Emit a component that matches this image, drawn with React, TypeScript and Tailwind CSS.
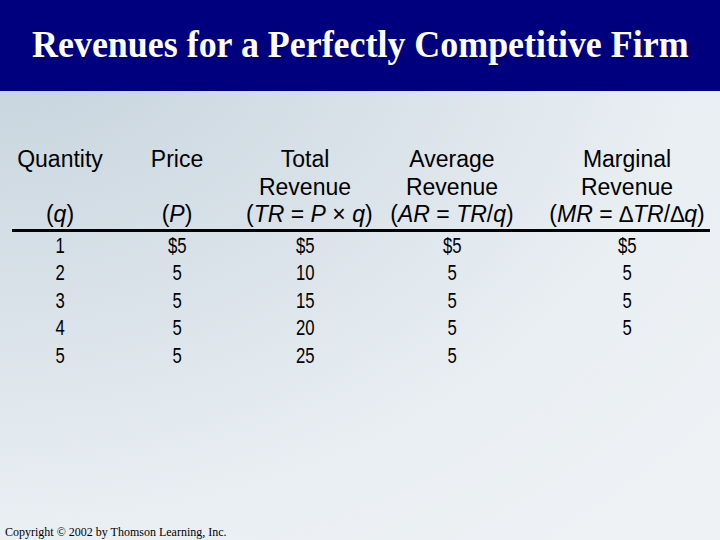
const rows = [
  ["1", "$5", "$5", "$5", "$5"],
  ["2", "5", "10", "5", "5"],
  ["3", "5", "15", "5", "5"],
  ["4", "5", "20", "5", "5"],
  ["5", "5", "25", "5", ""],
];

const cols = "grid grid-cols-[96px_138px_118px_176px_174px] text-center";

export default function App() {
  return (
    <div className="flex h-[540px] w-[720px] flex-col overflow-hidden bg-[radial-gradient(ellipse_at_top_left,#c3d1db_0%,#d9e2e9_40%,#eaeff3_70%,#eff2f5_100%)]">
      <header className="flex h-[91px] shrink-0 items-center justify-center bg-[#00007f] pb-1">
        <h1 className="inline-block scale-x-[0.945] whitespace-nowrap font-['Liberation_Serif',serif] text-[38px] font-bold leading-none text-white">
          Revenues for a Perfectly Competitive Firm
        </h1>
      </header>

      <main className="flex-1 pl-3 pt-[55px] text-black">
        <div className={`${cols} w-[698px] border-b-[3px] border-black font-['Liberation_Sans',Arial,sans-serif] text-[23px] leading-[27.5px]`}>
          <div className="whitespace-nowrap">
            Quantity<br />&nbsp;<br />(<i>q</i>)
          </div>
          <div className="whitespace-nowrap">
            Price<br />&nbsp;<br />(<i>P</i>)
          </div>
          <div className="whitespace-nowrap">
            Total<br />Revenue<br />(<i>TR</i> = <i>P</i> × <i>q</i>)
          </div>
          <div className="whitespace-nowrap">
            Average<br />Revenue<br />(<i>AR</i> = <i>TR</i>/<i>q</i>)
          </div>
          <div className="whitespace-nowrap">
            Marginal<br />Revenue<br />(<i>MR</i> = <i>∆TR</i>/<i>∆q</i>)
          </div>
        </div>

        <div className="font-['Liberation_Sans',Arial,sans-serif] text-[22px] leading-[27.5px]">
          {rows.map((row) => (
            <div key={row[0]} className={cols}>
              {row.map((cell, i) => (
                <div key={i} className="h-[27.5px]">
                  <span className="inline-block scale-x-[0.76]">{cell}</span>
                </div>
              ))}
            </div>
          ))}
        </div>
      </main>

      <footer className="pb-[1px] pl-[5px] font-['Liberation_Serif',serif] text-[12px] leading-[14px] text-black">
        Copyright © 2002 by Thomson Learning, Inc.
      </footer>
    </div>
  );
}
